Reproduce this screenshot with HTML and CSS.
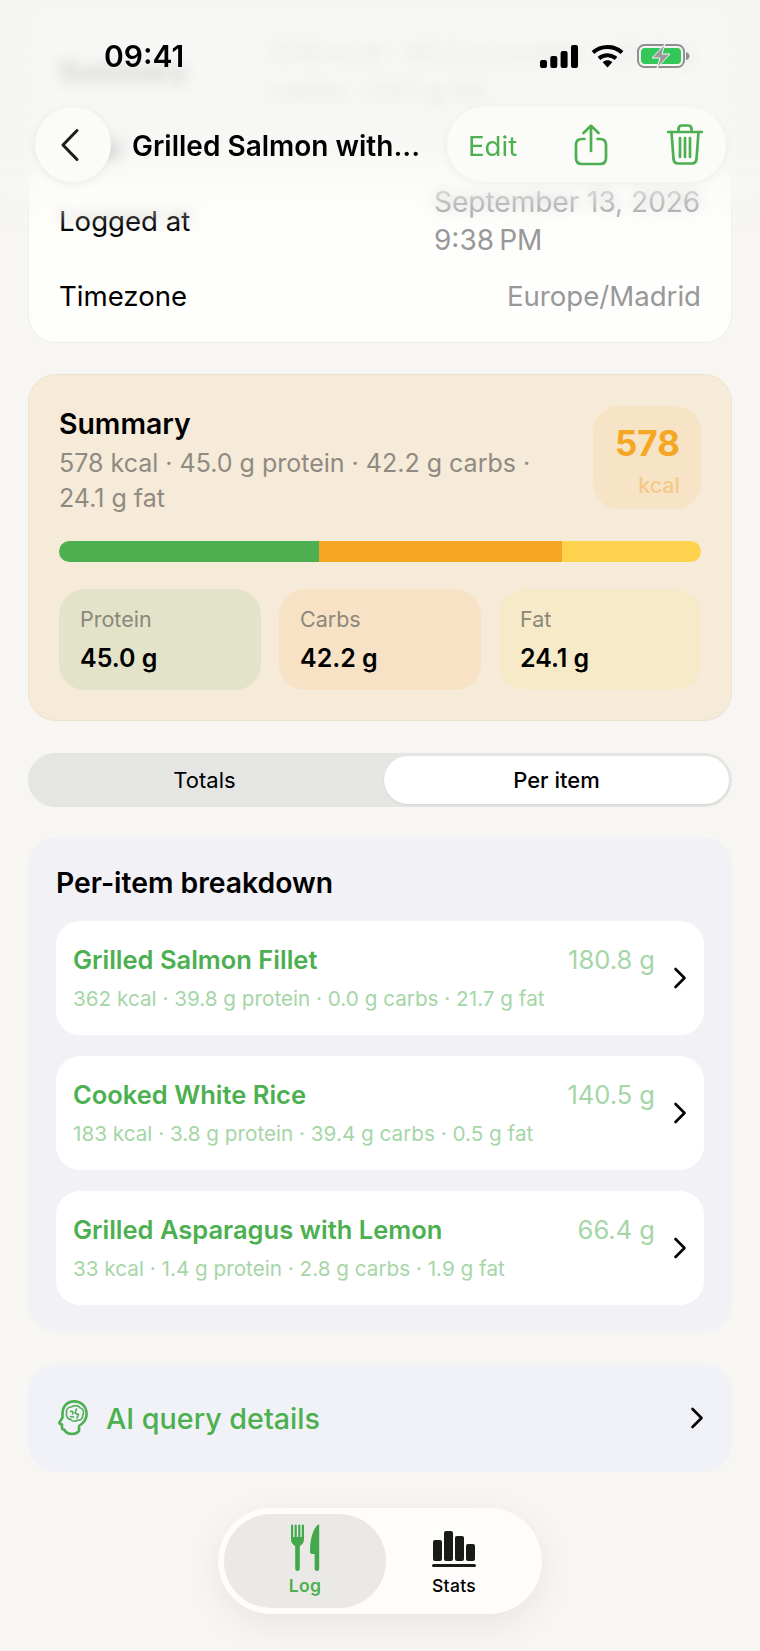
FILE: index.html
```html
<!DOCTYPE html>
<html lang="en">
<head>
    <meta charset="UTF-8">
    <meta name="viewport" content="width=device-width, initial-scale=1.0">
    <title>Grilled Salmon with Rice</title>
    <link rel="stylesheet" href="styles.css">
</head>
<body>
    <div class="page">
        <div class="card info-card">
            <div class="info-row">
                <span class="info-label info-label-strong">Summary</span>
                <span class="info-value info-value-wide">578 kcal · 45.0 g protein · 42.2 g carbs · 24.1 g fat</span>
            </div>
            <div class="info-row">
                <span class="info-label">Meal</span>
            </div>
            <div class="info-row">
                <span class="info-label">Logged at</span>
                <span class="info-value info-date">September 13, 2026<br>9:38&#8239;PM</span>
            </div>
            <div class="info-row">
                <span class="info-label">Timezone</span>
                <span class="info-value">Europe/Madrid</span>
            </div>
        </div>

        <div class="card summary-card">
            <div class="summary-head">
                <div class="summary-text">
                    <h2>Summary</h2>
                    <p>578 kcal · 45.0 g protein · 42.2 g carbs · 24.1 g fat</p>
                </div>
                <div class="kcal-badge">
                    <span class="kcal-num">578</span>
                    <span class="kcal-unit">kcal</span>
                </div>
            </div>
            <div class="macro-bar">
                <div class="macro-part macro-protein"></div>
                <div class="macro-part macro-carbs"></div>
                <div class="macro-part macro-fat"></div>
            </div>
            <div class="tiles">
                <div class="tile tile-protein">
                    <span class="tile-label">Protein</span>
                    <span class="tile-value">45.0 g</span>
                </div>
                <div class="tile tile-carbs">
                    <span class="tile-label">Carbs</span>
                    <span class="tile-value">42.2 g</span>
                </div>
                <div class="tile tile-fat">
                    <span class="tile-label">Fat</span>
                    <span class="tile-value">24.1 g</span>
                </div>
            </div>
        </div>

        <div class="segmented">
            <div class="segment segment-plain">Totals</div>
            <div class="segment segment-active">Per item</div>
        </div>

        <div class="card breakdown-card">
            <h2>Per-item breakdown</h2>
            <div class="items">
                <div class="item">
                    <div class="item-body">
                        <div class="item-top">
                            <span class="item-name">Grilled Salmon Fillet</span>
                            <span class="item-weight">180.8 g</span>
                        </div>
                        <div class="item-sub">362 kcal · 39.8 g protein · 0.0 g carbs · 21.7 g fat</div>
                    </div>
                    <svg class="chevron" viewBox="0 0 14 22"><path d="M2.5 2 L11.5 11 L2.5 20"/></svg>
                </div>
                <div class="item">
                    <div class="item-body">
                        <div class="item-top">
                            <span class="item-name">Cooked White Rice</span>
                            <span class="item-weight">140.5 g</span>
                        </div>
                        <div class="item-sub">183 kcal · 3.8 g protein · 39.4 g carbs · 0.5 g fat</div>
                    </div>
                    <svg class="chevron" viewBox="0 0 14 22"><path d="M2.5 2 L11.5 11 L2.5 20"/></svg>
                </div>
                <div class="item">
                    <div class="item-body">
                        <div class="item-top">
                            <span class="item-name">Grilled Asparagus with Lemon</span>
                            <span class="item-weight">66.4 g</span>
                        </div>
                        <div class="item-sub">33 kcal · 1.4 g protein · 2.8 g carbs · 1.9 g fat</div>
                    </div>
                    <svg class="chevron" viewBox="0 0 14 22"><path d="M2.5 2 L11.5 11 L2.5 20"/></svg>
                </div>
            </div>
        </div>

        <div class="card ai-card">
            <svg class="ai-icon" viewBox="0 0 30 36">
                <path class="ai-head" d="M7 31 C7 30 6.500 29.500 5.500 29.500 C4.500 29.500 4 29 4 27.500 V24.500 L1.800 23.700 Q1 23.300 1.500 22.400 L4.500 17.500 V14 C4.500 6 9.500 1.400 16 1.400 C23.500 1.400 28.600 6.500 28.600 14 C28.600 19.500 26 23 21 26 V31 C18 35 10 35 7 31 Z"/>
                <path class="ai-brain" d="M8.500 14 C7.500 9.500 10.500 6.500 13.500 7 C15.500 5 20.500 5 22 7.800 C25.500 8.500 26.500 12.500 24.800 15 C25.200 18.500 22 21 19.500 20 C17.500 22 14 21.500 13 19.500 C10.500 19.500 8 17 8.500 14 Z M12.500 11.500 C14.500 10.500 15.500 12.500 14.500 14 M18.500 9 L17 13 L20.500 14.500 L19 18 M12.500 16.500 L15.500 17"/>
            </svg>
            <span class="ai-text">AI query details</span>
            <svg class="chevron" viewBox="0 0 14 22"><path d="M2.5 2 L11.5 11 L2.5 20"/></svg>
        </div>

        <div class="tabbar">
            <div class="tab tab-active">
                <svg class="tab-icon" viewBox="0 0 44 47">
                    <path class="fork" d="M9.100 0.500 Q10.200 0.500 10.200 1.600 V13 H11.600 V1.600 Q11.600 0.500 12.700 0.500 Q13.800 0.500 13.800 1.600 V13 H15.200 V1.600 Q15.200 0.500 16.300 0.500 Q17.400 0.500 17.400 1.600 V13 H18.800 V1.600 Q18.800 0.500 19.900 0.500 Q21 0.500 21 1.600 V15 Q21 20 16.800 22 V44.700 Q16.800 47 14.500 47 Q12.200 47 12.200 44.700 V22 Q8 20 8 15 V1.600 Q8 0.500 9.100 0.500 Z"/>
                    <path class="fork" d="M35 0.500 Q36.200 0.300 36.200 1.500 V44.700 Q36.200 47 34 47 Q31.600 47 31.600 44.700 V30 H29 Q27 30 27 28 C27 16 29.500 5.500 35 0.500 Z"/>
                </svg>
                <span class="tab-label">Log</span>
            </div>
            <div class="tab tab-stats">
                <svg class="tab-icon" viewBox="0 0 44 47">
                    <rect class="bar" x="1" y="16" width="9" height="21" rx="2"/>
                    <rect class="bar" x="12" y="7" width="9" height="30" rx="2"/>
                    <rect class="bar" x="23" y="12" width="9" height="25" rx="2"/>
                    <rect class="bar" x="34" y="20" width="9" height="17" rx="2"/>
                    <rect class="bar" x="0" y="40" width="44" height="3" rx="1.5"/>
                </svg>
                <span class="tab-label">Stats</span>
            </div>
        </div>
    </div>

    <!-- vidro desfocado por cima do conteudo rolado -->
    <div class="top-blur"></div>

    <div class="statusbar">
        <span class="clock">09:41</span>
        <div class="status-icons">
            <svg class="ic-signal" viewBox="0 0 38 23">
                <rect x="0" y="15" width="7" height="8" rx="2"/>
                <rect x="10.3" y="11" width="7" height="12" rx="2"/>
                <rect x="20.6" y="6" width="7" height="17" rx="2"/>
                <rect x="31" y="0" width="7" height="23" rx="2"/>
            </svg>
            <svg class="ic-wifi" viewBox="0 0 33 24">
                <path class="wifi-arc" d="M2 8.5 C10 1 23 1 31 8.5"/>
                <path class="wifi-arc" d="M8 14.5 C12.5 10.3 20.5 10.3 25 14.5"/>
                <path d="M11.7 18.3 C14.5 15.7 18.5 15.7 21.3 18.3 L16.5 23.6 Z"/>
            </svg>
            <svg class="ic-battery" viewBox="0 0 53 24">
                <rect class="batt-shell" x="1" y="1" width="46" height="22" rx="6.5"/>
                <rect class="batt-fill" x="4" y="4" width="40" height="16" rx="4"/>
                <path class="batt-nub" d="M49 8 Q52.5 9 52.5 12 Q52.5 15 49 16 Z"/>
                <path class="batt-bolt" d="M28 0 L15 14 H23 L20 24 L33 10 H25 Z"/>
            </svg>
        </div>
    </div>

    <div class="navbar">
        <div class="back-btn">
            <svg class="back-icon" viewBox="0 0 20 34"><path d="M17 2.5 L3 17 L17 31.5"/></svg>
        </div>
        <div class="nav-title">Grilled Salmon with...</div>
        <div class="nav-actions">
            <span class="nav-edit">Edit</span>
            <svg class="ic-share" viewBox="0 0 34 42">
                <path d="M10.5 15 H8 Q2 15 2 21 V34 Q2 40 8 40 H26 Q32 40 32 34 V21 Q32 15 26 15 H23.5"/>
                <path d="M17 27 V2 M9.5 9 L17 1.6 L24.500 9"/>
            </svg>
            <svg class="ic-trash" viewBox="0 0 36 41">
                <path d="M1 8 H35 M11.500 7.500 V5 Q11.500 1.500 15 1.500 H21 Q24.500 1.500 24.500 5 V7.500"/>
                <path d="M4.500 8 L6.500 35 Q7 39.500 11 39.500 H25 Q29 39.500 29.500 35 L31.500 8"/>
                <path d="M13 14 V33 M18 14 V33 M23 14 V33"/>
            </svg>
        </div>
    </div>
</body>
</html>
```
FILE: styles.css
```css
* {
    box-sizing: border-box;
}

body {
    margin: 0;
    width: 760px;
    height: 1651px;
    overflow: hidden;
    position: relative;
    font-family: 'Inter', 'Liberation Sans', sans-serif;
    color: #000;
    background-color: #f7f6f3;
}

h2, p {
    margin: 0;
}

.page {
    padding: 4px 28px 0;
}

.card {
    border-radius: 28px;
}

/* Cartao de informacoes */
.info-card {
    background: #fefefc;
    border: 1px solid #eeede9;
    padding: 28px 30px 27px;
    display: flex;
    flex-direction: column;
    gap: 18px;
}

.info-row {
    display: flex;
    justify-content: space-between;
    align-items: center;
    min-height: 38px;
    font-size: 27.6px;
    line-height: 38px;
}

.info-label-strong {
    font-weight: 600;
}

.info-value {
    color: #98989a;
    white-space: nowrap;
}

.info-date {
    width: 267px;
    font-size: 28px;
}

.info-value-wide {
    width: 430px;
    white-space: normal;
    flex: none;
}

/* Resumo */
.summary-card {
    margin-top: 31px;
    height: 347px;
    background: #f6ead8;
    border: 1px solid #ece2d0;
    padding: 31px 30px 0;
}

.summary-head {
    display: flex;
    justify-content: space-between;
    gap: 30px;
    height: 135px;
}

.summary-text h2 {
    font-size: 28.4px;
    line-height: 36px;
    font-weight: 600;
}

.summary-text p {
    margin-top: 4px;
    font-size: 25px;
    line-height: 35px;
    color: #8f8a82;
}

.kcal-badge {
    flex: none;
    width: 108px;
    height: 103px;
    padding: 15px 21px 0 0;
    border-radius: 26px;
    background: #f7e3c6;
    display: flex;
    flex-direction: column;
    align-items: flex-end;
}

.kcal-num {
    font-size: 35px;
    line-height: 44px;
    font-weight: 700;
    color: #f5a623;
}

.kcal-unit {
    margin-top: 5px;
    font-size: 21.5px;
    line-height: 30px;
    font-weight: 500;
    color: #f5c987;
}

.macro-bar {
    display: flex;
    height: 21px;
    border-radius: 11px;
    overflow: hidden;
}

.macro-protein { width: 260px; background: #4caf50; }
.macro-carbs { width: 243px; background: #f5a623; }
.macro-fat { flex: 1; background: #ffd24d; }

.tiles {
    margin-top: 27px;
    display: grid;
    grid-template-columns: repeat(3, 1fr);
    gap: 18px;
}

.tile {
    height: 101px;
    padding: 16px 21px 0;
    border-radius: 26px;
    display: flex;
    flex-direction: column;
}

.tile-protein { background: #e2e3c8; }
.tile-carbs { background: #f7e2c5; }
.tile-fat { background: #f7eac8; }

.tile-label {
    font-size: 21.5px;
    line-height: 28px;
    color: #8d877c;
}

.tile-value {
    margin-top: 8px;
    font-size: 25px;
    line-height: 34px;
    font-weight: 600;
}

/* Abas */
.segmented {
    margin-top: 32px;
    height: 54px;
    padding: 3px 3px 3px 0;
    border-radius: 27px;
    background: #e5e5e4;
    display: grid;
    grid-template-columns: 356fr 345fr;
}

.segment {
    display: flex;
    align-items: center;
    justify-content: center;
    font-size: 22px;
    font-weight: 400;
}

.segment-plain {
    padding-right: 3px;
}

.segment-active {
    background: #fff;
    border-radius: 24px;
    font-weight: 500;
    box-shadow: 0 1px 2px rgba(0, 0, 0, 0.08);
}

/* Itens */
.breakdown-card {
    margin-top: 30px;
    height: 495px;
    padding: 28px 28px 0;
    background: #f1f1f6;
}

.breakdown-card h2 {
    font-size: 28.3px;
    line-height: 36px;
    font-weight: 600;
}

.items {
    margin-top: 20px;
    display: flex;
    flex-direction: column;
    gap: 21px;
}

.item {
    height: 114px;
    padding: 0 17px;
    border-radius: 24px;
    background: #fff;
    display: flex;
    align-items: center;
    gap: 18px;
}

.item-body {
    flex: 1;
    min-width: 0;
}

.item-top {
    display: flex;
    justify-content: space-between;
    font-size: 25.5px;
    line-height: 34px;
}

.item-name {
    font-weight: 600;
    color: #4caf50;
}

.item-weight {
    color: #a5d6a7;
}

.item-sub {
    margin-top: 7px;
    font-size: 20.7px;
    line-height: 30px;
    color: #a5d6a7;
    white-space: nowrap;
}

.chevron {
    flex: none;
    width: 14px;
    height: 22px;
    fill: none;
    stroke: #000;
    stroke-width: 2.6;
    stroke-linecap: round;
    stroke-linejoin: round;
}

/* Consulta de IA */
.ai-card {
    margin-top: 32px;
    height: 108px;
    padding: 0 28px 0 30px;
    background: #f1f2f7;
    display: flex;
    align-items: center;
}

.ai-icon {
    width: 30px;
    height: 36px;
    fill: none;
    stroke: #4caf50;
    stroke-linecap: round;
    stroke-linejoin: round;
}

.ai-head { stroke-width: 2.6; }
.ai-brain { stroke-width: 1.6; }

.ai-text {
    flex: 1;
    margin-left: 18px;
    font-size: 28.7px;
    font-weight: 500;
    color: #4caf50;
}

/* Barra inferior */
.tabbar {
    margin: 36px auto 0;
    width: 324px;
    height: 106px;
    padding: 6px;
    border-radius: 53px;
    background: #fefdfb;
    box-shadow: 0 10px 36px rgba(0, 0, 0, 0.07);
    display: flex;
}

.tab {
    display: flex;
    flex-direction: column;
    align-items: center;
    padding-top: 10px;
}

.tab-active {
    width: 162px;
    border-radius: 47px;
    background: #ebe9e6;
    color: #4caf50;
}

.tab-stats {
    flex: 1;
    padding-right: 14px;
}

.tab-icon {
    width: 44px;
    height: 47px;
}

.fork { fill: #43a84a; }
.bar { fill: #1a1a18; }

.tab-label {
    margin-top: 5px;
    font-size: 17.5px;
    line-height: 20px;
    font-weight: 450;
    letter-spacing: 0.3px;
}

.tab-active .tab-label {
    font-weight: 600;
}

/* Sobreposicoes do topo */
.top-blur {
    position: absolute;
    top: 0;
    left: 0;
    width: 760px;
    height: 232px;
    background: linear-gradient(rgba(245, 245, 243, 0.86) 0, rgba(245, 245, 243, 0.82) 140px, rgba(248, 248, 246, 0.35) 195px, rgba(248, 248, 246, 0) 232px);
    -webkit-backdrop-filter: blur(7px);
    backdrop-filter: blur(7px);
    -webkit-mask-image: linear-gradient(#000 165px, transparent 232px);
    mask-image: linear-gradient(#000 165px, transparent 232px);
}

.statusbar {
    position: absolute;
    top: 36px;
    left: 104px;
    width: 586px;
    height: 40px;
    display: flex;
    justify-content: space-between;
    align-items: center;
}

.clock {
    font-size: 30px;
    font-weight: 600;
}

.status-icons {
    display: flex;
    align-items: center;
    gap: 13px;
}

.ic-signal { width: 38px; height: 23px; }
.ic-wifi { width: 33px; height: 24px; }
.ic-battery { width: 53px; height: 24px; }

.wifi-arc {
    fill: none;
    stroke: #000;
    stroke-width: 4;
}

.batt-shell {
    fill: none;
    stroke: #8f8f8f;
    stroke-width: 2;
}

.batt-fill { fill: #34c759; }
.batt-nub { fill: #8f8f8f; }

.batt-bolt {
    fill: #9a9a9a;
    stroke: #f5f5f3;
    stroke-width: 1;
}

.navbar {
    position: absolute;
    top: 107px;
    left: 35px;
    width: 691px;
    height: 75px;
    display: flex;
    align-items: center;
}

.back-btn {
    flex: none;
    width: 76px;
    height: 75px;
    border-radius: 50%;
    background: #fbfbf8;
    box-shadow: 0 2px 10px rgba(0, 0, 0, 0.07);
    display: flex;
    align-items: center;
    justify-content: center;
}

.back-icon {
    width: 20px;
    height: 34px;
    margin-right: 6px;
    fill: none;
    stroke: #1c1c1c;
    stroke-width: 3;
    stroke-linecap: round;
    stroke-linejoin: round;
}

.nav-title {
    flex: 1;
    margin-left: 21px;
    padding-top: 2px;
    font-size: 28px;
    font-weight: 600;
    white-space: nowrap;
}

.nav-actions {
    flex: none;
    width: 279px;
    height: 75px;
    padding: 0 23px 0 21px;
    border-radius: 38px;
    background: #fbfbf8;
    box-shadow: 0 2px 10px rgba(0, 0, 0, 0.05);
    display: flex;
    align-items: center;
    justify-content: space-between;
}

.nav-edit {
    padding-top: 2px;
    font-size: 27.6px;
    color: #4caf50;
}

.ic-share, .ic-trash {
    fill: none;
    stroke: #4caf50;
    stroke-width: 2.7;
    stroke-linecap: round;
    stroke-linejoin: round;
}

.ic-share { width: 34px; height: 42px; margin-right: 3px; }
.ic-trash { width: 36px; height: 41px; }
```
